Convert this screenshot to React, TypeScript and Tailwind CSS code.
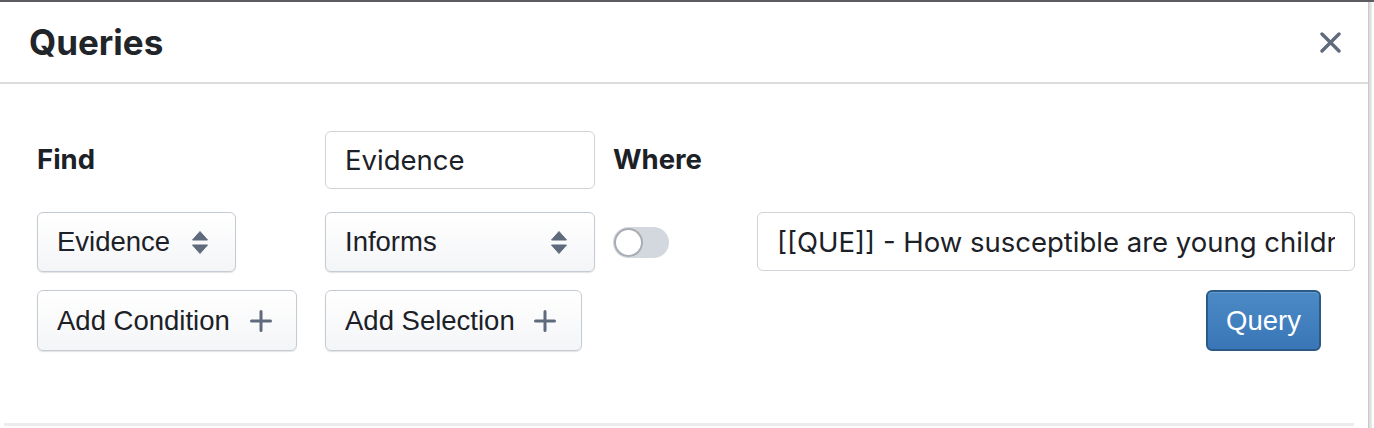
import React, { useState } from 'react';

const sans = { fontFamily: 'Inter, "Noto Sans", sans-serif' };
const arial = { fontFamily: '"Liberation Sans", Arial, sans-serif' };

const Caret: React.FC = () => (
  <svg width="16" height="23" viewBox="0 0 16 23" className="shrink-0">
    <path d="M8 0.5 L15.5 9 L0.5 9 Z" fill="#5f6b7c" strokeLinejoin="round" stroke="#5f6b7c" strokeWidth="1" />
    <path d="M0.5 14 L15.5 14 L8 22.5 Z" fill="#5f6b7c" strokeLinejoin="round" stroke="#5f6b7c" strokeWidth="1" />
  </svg>
);

const Plus: React.FC = () => (
  <svg width="22" height="22" viewBox="0 0 22 22" className="shrink-0">
    <path d="M11 1.5 V20.5 M1.5 11 H20.5" stroke="#5f6b7c" strokeWidth="3" strokeLinecap="round" />
  </svg>
);

const btnBase =
  'flex items-center rounded-[6px] border border-[#c5cbd3] bg-gradient-to-b from-white to-[#f4f5f7] text-[#1c2127] text-[27.5px] shadow-[0_1px_1px_rgba(17,20,24,0.12)]';

const App: React.FC = () => {
  const [on, setOn] = useState(false);

  return (
    <div className="w-[1374px] h-[428px] overflow-hidden bg-white">
      <div className="w-[1374px] h-[428px] flex flex-col border-t-2 border-[#5c5c61]">
        <div className="flex flex-1 min-h-0">
          <div className="w-[1368px] flex flex-col">
            {/* Header */}
            <div className="h-[82px] shrink-0 flex items-center justify-between pl-[29px] pr-[26px] border-b-2 border-[#dcdcdc]">
              <h5 className="text-[35px] font-bold text-[#212529] leading-none" style={sans}>
                Queries
              </h5>
              <button className="w-[24px] h-[24px] flex items-center justify-center" aria-label="Close">
                <svg width="21" height="21" viewBox="0 0 21 21">
                  <path d="M2 2 L19 19 M19 2 L2 19" stroke="#5f6b7c" strokeWidth="3.4" strokeLinecap="round" />
                </svg>
              </button>
            </div>

            {/* Body */}
            <div className="flex-1 pt-[47px] pl-[37px]">
              <div className="grid grid-cols-[288px_288px_144px_598px]">
                {/* row 1 */}
                <div className="h-[58px] flex items-center text-[27.5px] font-bold text-[#1c2127]" style={sans}>Find</div>
                <input
                  readOnly
                  value="Evidence"
                  className="w-[270px] h-[58px] rounded-[6px] border border-[#d0d3d7] px-[19px] text-[27.5px] text-[#1c2127] outline-none"
                  style={sans}
                />
                <div className="h-[58px] flex items-center text-[27.5px] font-bold text-[#1c2127]" style={sans}>Where</div>
                <div />

                {/* row 2 */}
                <div className="pt-[23px]">
                  <div className={`${btnBase} w-[199px] h-[60px] pl-[19px] pr-[27px] justify-between`} style={arial}>
                    <span>Evidence</span>
                    <Caret />
                  </div>
                </div>
                <div className="pt-[23px]">
                  <div className={`${btnBase} w-[270px] h-[60px] pl-[19px] pr-[27px] justify-between`} style={arial}>
                    <span>Informs</span>
                    <Caret />
                  </div>
                </div>
                <div className="pt-[23px] flex items-center">
                  <button
                    onClick={() => setOn(!on)}
                    className="w-[56px] h-[31px] rounded-full bg-[#d3d8de] relative"
                    aria-label="toggle"
                  >
                    <span className="absolute left-[1px] top-[1px] w-[29px] h-[29px] rounded-full bg-white border-[2px] border-[#a9adb3]" />
                  </button>
                </div>
                <div className="pt-[23px]">
                  <input
                    readOnly
                    value="[[QUE]] - How susceptible are young children to misinformation?"
                    className="w-[598px] h-[59px] rounded-[6px] border border-[#d0d3d7] px-[19px] text-[27.5px] text-[#1c2127] outline-none"
                    style={sans}
                  />
                </div>

                {/* row 3 */}
                <div className="pt-[18px]">
                  <div className={`${btnBase} w-[260px] h-[61px] pl-[19px] gap-[20px]`} style={arial}>
                    <span>Add Condition</span>
                    <Plus />
                  </div>
                </div>
                <div className="pt-[18px]">
                  <div className={`${btnBase} w-[257px] h-[61px] pl-[19px] gap-[19px]`} style={arial}>
                    <span>Add Selection</span>
                    <Plus />
                  </div>
                </div>
                <div />
                <div className="pt-[18px] flex justify-end pr-[34px]">
                  <button
                    className="w-[115px] h-[61px] rounded-[6px] border-2 border-[#2b5a87] bg-gradient-to-b from-[#4b8ac6] to-[#3a76b7] text-white text-[27.5px] shadow-[inset_0_1px_0_rgba(255,255,255,0.15)]"
                    style={arial}
                  >
                    Query
                  </button>
                </div>
              </div>
            </div>

            {/* footer border */}
            <div className="h-[5px] shrink-0 flex">
              <div className="ml-[4px] w-[1350px] h-[3px] bg-[#ececec]" />
            </div>
          </div>
          {/* right edge */}
          <div className="w-[6px] flex">
            <div className="w-[1px] bg-[#c9c9c9]" />
            <div className="w-[3px] bg-gradient-to-r from-[#d9d9d9] to-[#ececec]" />
            <div className="w-[2px] bg-white" />
          </div>
        </div>
      </div>
    </div>
  );
};

export default App;
